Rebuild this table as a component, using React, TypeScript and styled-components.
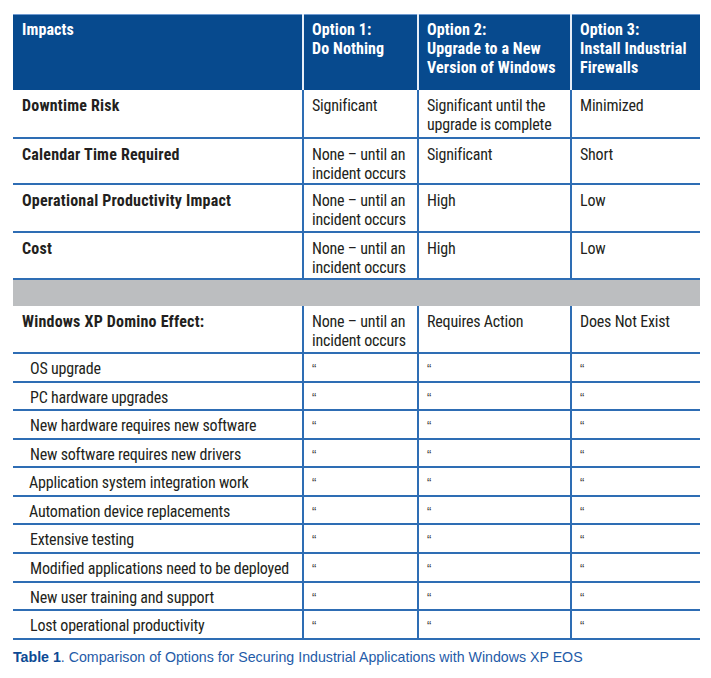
import React from "react";
import styled, { createGlobalStyle } from "styled-components";

const Global = createGlobalStyle`
  html, body { margin: 0; padding: 0; background: #ffffff; }
  body { font-family: "Liberation Sans Narrow", "Roboto Condensed", "Arial Narrow", "Liberation Sans", sans-serif; }
`;

const LINE = "#2e6db4";
const HEAD = "#074a8e";

const Page = styled.div`
  padding: 14px 11px 0 13px;
  width: 687px;
`;

const Table = styled.table`
  border-collapse: collapse;
  table-layout: fixed;
  width: 687px;
  color: #231f20;
  font-size: 16px;
  line-height: 19px;
`;

const HeadCell = styled.th`
  background: ${HEAD};
  color: #ffffff;
  font-weight: 700;
  text-align: left;
  vertical-align: top;
  height: 75px;
  padding: 5px 6px 0 9px;
  box-sizing: border-box;
  border-top: 1px solid #6f9ad0;
  letter-spacing: 0.1px;
  & + & { border-left: 2px solid #e6eef8; padding-left: 8px; }
`;

const Row = styled.tr<{ $h: number }>`
  height: ${(p) => p.$h}px;
  border-bottom: 2px solid ${LINE};
`;

const Cell = styled.td<{ $bold?: boolean; $indent?: number }>`
  vertical-align: top;
  padding: 6px 6px 0 ${(p) => p.$indent ?? 9}px;
  box-sizing: border-box;
  font-weight: ${(p) => (p.$bold ? 700 : 400)};
  letter-spacing: ${(p) => (p.$bold ? "0.2px" : "-0.2px")};
  white-space: nowrap;
  & + & { border-left: 2px solid ${LINE}; padding-left: 8px; }
`;

const SubCell = styled(Cell)`
  padding-top: 5px;
`;

const Ditto = styled.span`
  font-family: "Liberation Sans", Arial, sans-serif;
  font-size: 13px;
  font-weight: 400;
  color: #3a3a3a;
  line-height: 16px;
  vertical-align: top;
  display: inline-block;
  padding-top: 2px;
`;

const Band = styled.td`
  background: #bcbec0;
  padding: 0;
`;

const BandRow = styled.tr`
  height: 27px;
`;

const Caption = styled.p`
  margin: 9px 0 0 0;
  font-family: "Liberation Sans", Arial, sans-serif;
  font-size: 14.2px;
  color: #1f5ba8;
`;

const CapLabel = styled.b`
  font-weight: 700;
  color: #0d4a94;
`;

const mainRows: [string, string, string, string][] = [
  ["Downtime Risk", "Significant", "Significant until the\nupgrade is complete", "Minimized"],
  ["Calendar Time Required", "None – until an\nincident occurs", "Significant", "Short"],
  ["Operational Productivity Impact", "None – until an\nincident occurs", "High", "Low"],
  ["Cost", "None – until an\nincident occurs", "High", "Low"],
];

const subRows: [string, number][] = [
  ["OS upgrade", 17],
  ["PC hardware upgrades", 17],
  ["New hardware requires new software", 17],
  ["New software requires new drivers", 17],
  ["Application system integration work", 16],
  ["Automation device replacements", 16],
  ["Extensive testing", 17],
  ["Modified applications need to be deployed", 17],
  ["New user training and support", 17],
  ["Lost operational productivity", 17],
];

const heights = [48, 46, 48, 47];
const subHeights = [29, 28, 29, 28, 29, 28, 29, 29, 28, 29];

const Multi: React.FC<{ text: string }> = ({ text }) => (
  <>
    {text.split("\n").map((t, i) => (
      <React.Fragment key={i}>
        {i > 0 && <br />}
        {t}
      </React.Fragment>
    ))}
  </>
);

export default function App() {
  return (
    <>
      <Global />
      <Page>
        <Table>
          <colgroup>
            <col style={{ width: 290 }} />
            <col style={{ width: 115 }} />
            <col style={{ width: 153 }} />
            <col style={{ width: 129 }} />
          </colgroup>
          <thead>
            <tr>
              <HeadCell>Impacts</HeadCell>
              <HeadCell>Option 1:<br />Do Nothing</HeadCell>
              <HeadCell>Option 2:<br />Upgrade to a New<br />Version of Windows</HeadCell>
              <HeadCell>Option 3:<br />Install Industrial<br />Firewalls</HeadCell>
            </tr>
          </thead>
          <tbody>
            {mainRows.map((r, i) => (
              <Row key={r[0]} $h={heights[i]}>
                <Cell $bold>{r[0]}</Cell>
                <Cell><Multi text={r[1]} /></Cell>
                <Cell><Multi text={r[2]} /></Cell>
                <Cell><Multi text={r[3]} /></Cell>
              </Row>
            ))}
            <BandRow>
              <Band colSpan={4} />
            </BandRow>
            <Row $h={47}>
              <Cell $bold>Windows XP Domino Effect:</Cell>
              <Cell><Multi text={"None – until an\nincident occurs"} /></Cell>
              <Cell>Requires Action</Cell>
              <Cell>Does Not Exist</Cell>
            </Row>
            {subRows.map(([label, ind], i) => (
              <Row key={label} $h={subHeights[i]}>
                <SubCell $indent={ind}>{label}</SubCell>
                <SubCell><Ditto>“</Ditto></SubCell>
                <SubCell><Ditto>“</Ditto></SubCell>
                <SubCell><Ditto>“</Ditto></SubCell>
              </Row>
            ))}
          </tbody>
        </Table>
        <Caption>
          <CapLabel>Table 1</CapLabel>. Comparison of Options for Securing Industrial Applications with Windows XP EOS
        </Caption>
      </Page>
    </>
  );
}
